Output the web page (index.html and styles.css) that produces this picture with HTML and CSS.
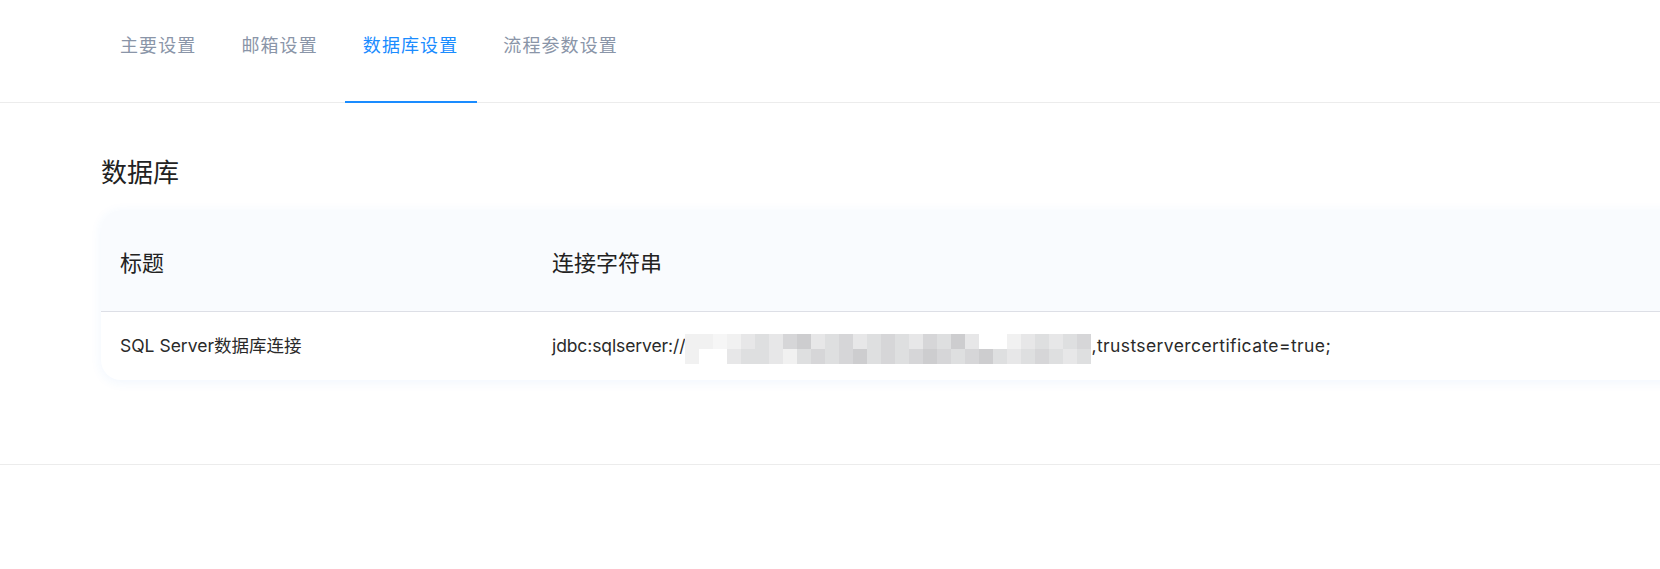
FILE: index.html
```html
<!DOCTYPE html>
<html lang="zh-CN">
<head>
<meta charset="utf-8">
<title>数据库设置</title>
<link rel="stylesheet" href="styles.css">
</head>
<body>
<nav class="tabs">
  <a class="tab">主要设置</a>
  <a class="tab">邮箱设置</a>
  <a class="tab active">数据库设置</a>
  <a class="tab">流程参数设置</a>
</nav>
<main class="content">
  <h2 class="title">数据库</h2>
  <div class="card">
    <div class="thead">
      <div class="th">标题</div>
      <div class="th">连接字符串</div>
    </div>
    <div class="trow">
      <div class="td">SQL Server数据库连接</div>
      <div class="td"><span class="pre">jdbc:sqlserver://</span><span class="mosaic"><i class="e"></i><i class="e"></i><i class="f"></i><i class="e"></i><i class="a"></i><i class="b"></i><i class="a"></i><i class="c"></i><i class="d"></i><i class="a"></i><i class="b"></i><i class="c"></i><i class="a"></i><i class="b"></i><i class="c"></i><i class="b"></i><i class="a"></i><i class="c"></i><i class="b"></i><i class="d"></i><i class="a"></i><i class="w"></i><i class="w"></i><i class="e"></i><i class="a"></i><i class="b"></i><i class="a"></i><i class="b"></i><i class="c"></i><i class="b"></i><i class="e"></i><i class="w"></i><i class="w"></i><i class="a"></i><i class="b"></i><i class="b"></i><i class="a"></i><i class="e"></i><i class="b"></i><i class="c"></i><i class="b"></i><i class="c"></i><i class="d"></i><i class="b"></i><i class="c"></i><i class="b"></i><i class="c"></i><i class="d"></i><i class="c"></i><i class="b"></i><i class="c"></i><i class="d"></i><i class="b"></i><i class="a"></i><i class="b"></i><i class="c"></i><i class="b"></i><i class="a"></i><i class="b"></i><i class="e"></i></span><span class="post">,trustservercertificate=true;</span></div>
    </div>
  </div>
</main>
<div class="divider"></div>
</body>
</html>
```

FILE: styles.css
```css
html, body {
  margin: 0;
  padding: 0;
  background: #ffffff;
  overflow: hidden;
}

body {
  font-family: Inter, "Noto Sans CJK SC", sans-serif;
  color: #222;
}

.tabs {
  display: flex;
  gap: 8px;
  height: 103px;
  box-sizing: border-box;
  padding-left: 102px;
  border-bottom: 1px solid #ececec;
}

.tab {
  display: block;
  box-sizing: border-box;
  height: 103px;
  margin-bottom: -1px;
  padding: 32px 19px 0 18px;
  font-family: "Noto Sans CJK SC", sans-serif;
  font-size: 18px;
  line-height: 24px;
  letter-spacing: 1.1px;
  color: #8a95a8;
  border-bottom: 2px solid transparent;
  cursor: pointer;
}

.tab.active {
  color: #1a8cff;
  border-bottom-color: #1a8cff;
}

.content {
  padding: 50px 0 0 101px;
}

.title {
  margin: 0;
  font-family: "Noto Sans CJK SC", sans-serif;
  font-size: 26px;
  line-height: 36px;
  font-weight: 400;
  color: #222;
}

.card {
  margin-top: 21px;
  width: 1620px;
  border-radius: 20px;
  background: #fff;
  box-shadow: 0 2px 12px rgba(40, 130, 240, 0.07);
  overflow: hidden;
}

.thead {
  display: grid;
  grid-template-columns: 432px 1fr;
  height: 102px;
  box-sizing: border-box;
  background: #f9fbfe;
  border-bottom: 1px solid #dddfe6;
}

.th {
  display: flex;
  align-items: center;
  padding-left: 19px;
  font-family: "Noto Sans CJK SC", sans-serif;
  font-size: 22px;
  line-height: 30px;
  color: #222;
}

.trow {
  display: grid;
  grid-template-columns: 432px 1fr;
  height: 68px;
}

.td {
  display: flex;
  align-items: center;
  padding-left: 19px;
  font-size: 17.5px;
  line-height: 24px;
  color: #2a2a2a;
  white-space: nowrap;
}

.pre {
  letter-spacing: -0.1px;
}

.post {
  letter-spacing: 0.4px;
}

.mosaic {
  display: inline-grid;
  grid-template-columns: repeat(30, 14px);
  grid-template-rows: 15px 15px;
  width: 406px;
  height: 30px;
  overflow: hidden;
  margin-top: 6px;
}

.mosaic i {
  display: block;
}

.mosaic .w { background: #ffffff; }
.mosaic .f { background: #f6f6f6; }
.mosaic .e { background: #f1f1f1; }
.mosaic .a { background: #e7e7e8; }
.mosaic .b { background: #dedfe0; }
.mosaic .c { background: #d6d6d8; }
.mosaic .d { background: #cdcdcf; }

.divider {
  margin-top: 84px;
  height: 1px;
  background: #ececec;
}
```
